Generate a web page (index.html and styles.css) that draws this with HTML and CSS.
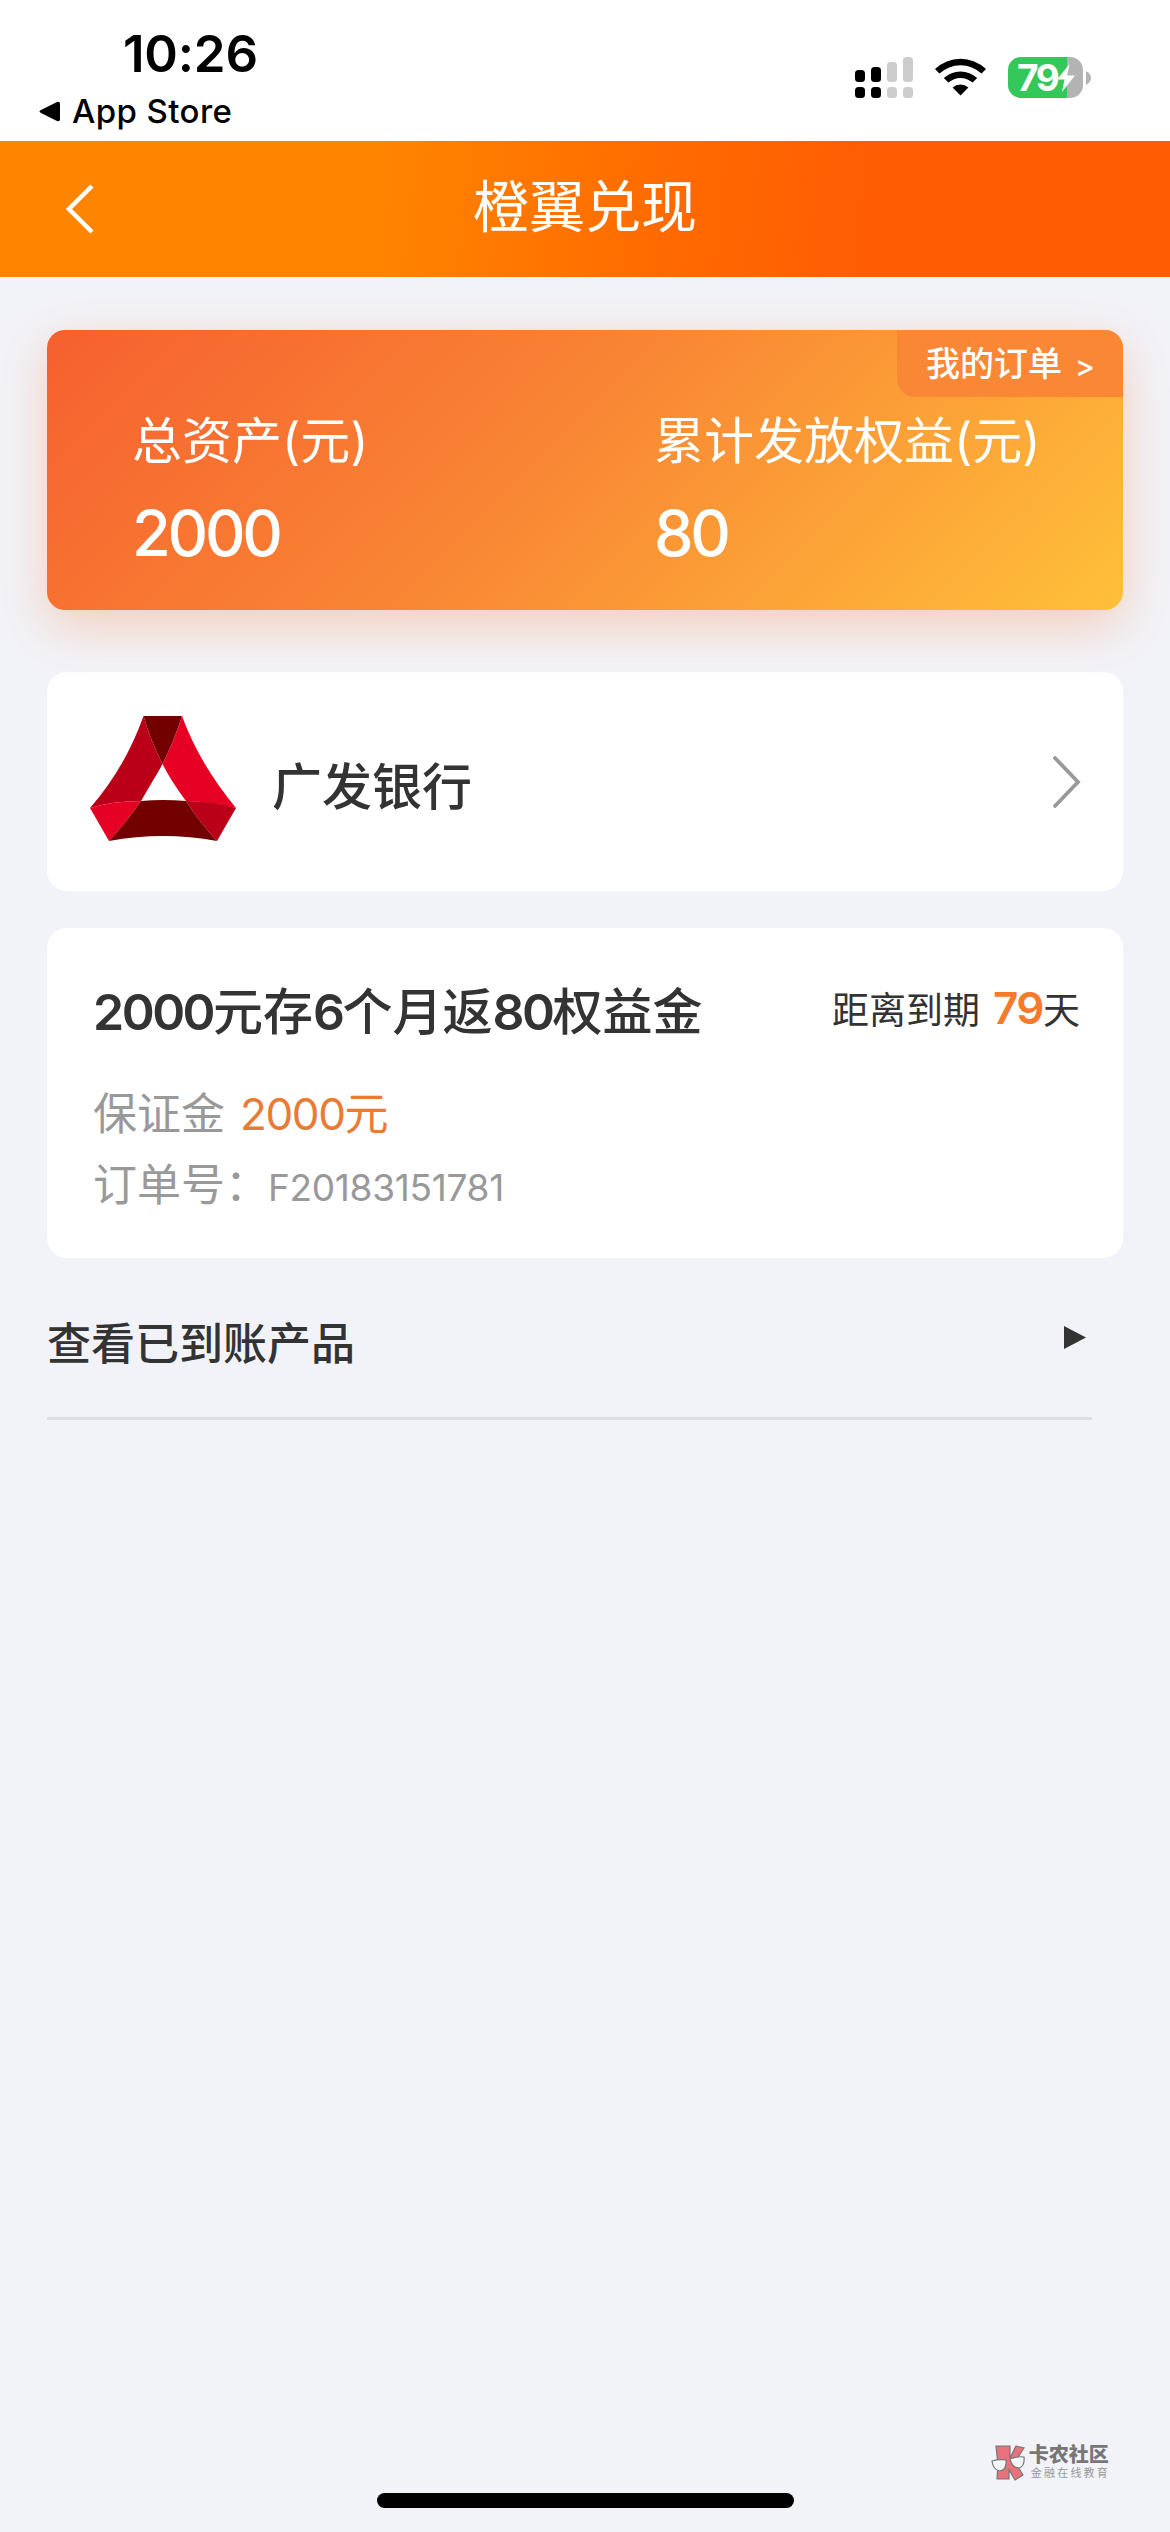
FILE: index.html
```html
<!DOCTYPE html>
<html lang="zh-CN">
<head>
<meta charset="utf-8">
<title>橙翼兑现</title>
<link rel="stylesheet" href="styles.css">
</head>
<body>
<div class="status">
  <div class="status-left">
    <div class="time">10:26</div>
    <div class="return">
      <svg width="21" height="21" viewBox="0 0 21 21"><path d="M2 9 18 1q3-1 3 2v15q0 3-3 2L2 12q-3-1.500 0-3z"/></svg>
      <span>App Store</span>
    </div>
  </div>
  <div class="status-right">
    <svg class="signal" width="58" height="41" viewBox="0 0 58 41">
      <g><rect x="0" y="13" width="10" height="12" rx="3.500"/><rect x="16" y="10" width="10" height="15" rx="3.500"/><rect x="0" y="30" width="10" height="11" rx="3.500"/><rect x="16" y="30" width="10" height="11" rx="3.500"/></g>
      <g fill="#ccc"><rect x="32" y="5" width="10" height="20" rx="3.500"/><rect x="48" y="0" width="10" height="25" rx="3.500"/><rect x="32" y="30" width="10" height="11" rx="3.500"/><rect x="48" y="30" width="10" height="11" rx="3.500"/></g>
    </svg>
    <svg class="wifi" width="51" height="38" viewBox="0 0 51 38">
      <path d="M0 11a37 37 0 0 1 51 0l-4.500 4.600a30.500 30.500 0 0 0-42 0z"/>
      <path d="M8.800 20a24.500 24.500 0 0 1 33.400 0l-4.600 4.600a18 18 0 0 0-24.200 0z"/>
      <path d="M17.600 29.500a12 12 0 0 1 15.800 0L25.500 37.500z"/>
    </svg>
    <div class="battery">
      <div class="battery-body"><span>79</span>
        <svg width="18" height="28" viewBox="0 0 18 28"><path d="M12.500 0 0 15.500h7.500L5 28 18 11.500h-7.800z" fill="#fff"/></svg>
      </div>
      <svg width="5" height="14" viewBox="0 0 5 14"><path d="M0 0q5 3 5 7t-5 7z" fill="#b3b3b3"/></svg>
    </div>
  </div>
</div>
<header class="header">
  <svg class="back" width="28" height="50" viewBox="0 0 28 50"><path d="M26 2 3 25l23 23" fill="none" stroke="#fff" stroke-width="4.500"/></svg>
  <h1>橙翼兑现</h1>
</header>
<main class="main">
  <section class="assets">
    <a class="orders">我的订单<span>&gt;</span></a>
    <div class="asset"><p>总资产(元)</p><strong>2000</strong></div>
    <div class="asset"><p>累计发放权益(元)</p><strong>80</strong></div>
  </section>
  <section class="card bank">
    <svg class="logo" width="148" height="128" viewBox="0 0 148 128">
      <path d="M54.500 1H93Q86 24 73.500 49 62 27 54.500 1z" fill="#720000"/>
      <path d="M54.500 1Q62 27 73.500 49C67 61 60 72 52 86Q24 86 1 93 36 53 54.500 1z" fill="#b90018"/>
      <path d="M93 1Q110 48 147 93 122 87 97 86 82 66 73.500 49 86 24 93 1z" fill="#e60023"/>
      <path d="M1 93Q24 86 52 86 36 109 20 126z" fill="#e60023"/>
      <path d="M147 93Q122 86 97 86 111 108 128 126z" fill="#b90018"/>
      <path d="M52 86Q74 84 97 86 111 108 128 126 74 116 20 126 36 109 52 86z" fill="#720000"/>
    </svg>
    <span class="bank-name">广发银行</span>
    <svg class="chevron" width="28" height="52" viewBox="0 0 28 52"><path d="M2 2l23 24L2 50" fill="none" stroke="#999" stroke-width="3.800" stroke-linecap="round"/></svg>
  </section>
  <section class="card order">
    <div class="order-head">
      <h2><b>2000</b>元存<b>6</b>个月返<b>80</b>权益金</h2>
      <p class="due"><span>距离到期</span><em>79</em><span>天</span></p>
    </div>
    <p class="line">保证金<span class="amount"><b>2000</b>元</span></p>
    <p class="line">订单号：<span class="number">F20183151781</span></p>
  </section>
  <a class="arrived"><span>查看已到账产品</span><svg width="22" height="23" viewBox="0 0 22 23"><path d="M0 0 22 11.500 0 23z" fill="#333"/></svg></a>
</main>
<footer class="footer">
  <div class="brand">
    <svg width="35" height="36" viewBox="0 0 35 36">
      <path d="M5 1h14v12L25 1l8 2-9 14 8 13-8 5-6-10v9H6l1-14z" fill="#e8727c" stroke="#777" stroke-width="1.200"/>
      <path d="M1 16q7-2 14-1 1 10-6 11-7-1-8-10zM19 14q7-3 14-2 1 9-5 11-7 0-9-9z" fill="#f4f5f8" stroke="#777" stroke-width="1.200"/>
    </svg>
    <div class="brand-text"><b>卡农社区</b><small>金融在线教育</small></div>
  </div>
  <div class="home"></div>
</footer>
</body>
</html>
```

FILE: styles.css
```css
* { box-sizing: border-box; }
body, h1, h2, p { margin: 0; font-weight: 400; }
body {
  display: flex; flex-direction: column; width: 1170px; height: 2532px; overflow: hidden;
  background: #f2f3f8; color: #333;
  font-family: Inter, "Noto Sans CJK SC", sans-serif;
}
svg { display: block; flex: none; }
.status { display: flex; justify-content: space-between; height: 141px; background: #fff; color: #000; }
.status-left { padding: 22px 0 0 39px; }
.time { padding-left: 84px; font-size: 51px; line-height: 64px; font-weight: 600; letter-spacing: -.2px; }
.return { display: flex; align-items: center; gap: 12px; margin-top: 5px; font-size: 33px; line-height: 40px; font-weight: 500; letter-spacing: .4px; }
.status-right { display: flex; align-items: flex-start; padding: 57px 79px 0 0; }
.wifi { margin: 1px 22px 0; }
.battery { display: flex; align-items: center; gap: 3px; }
.battery-body {
  display: flex; align-items: center; width: 75px; height: 41px; padding-left: 9px; border-radius: 13px;
  background: linear-gradient(90deg, #34c759 79%, #b3b3b3 79%);
  color: #fff; font-size: 37px; line-height: 41px; font-weight: 700; letter-spacing: -2.500px;
}
.header {
  display: grid; grid-template-columns: 120px 1fr 120px; align-items: center; height: 136px;
  background: linear-gradient(97deg, #ff8500 32%, #ff6a00 57%, #ff5c04 75%); color: #fff;
}
.back { margin-left: 66px; }
.header h1 { text-align: center; font-size: 56px; line-height: 80px; font-weight: 400; margin-top: -5px; }
.main { display: flex; flex-direction: column; padding: 53px 47px 0; }
.assets {
  position: relative; display: grid; grid-template-columns: 522px 1fr; height: 280px; padding: 74px 0 0 85px;
  border-radius: 18px; color: #fff;
  background: linear-gradient(135deg, #f6602f, #f98534 45%, #ffc03a);
  box-shadow: 0 16px 50px rgba(245, 120, 50, .3);
}
.asset p { font-size: 50px; line-height: 74px; font-weight: 400; white-space: nowrap; }
.asset strong { display: block; margin-top: 17px; font-size: 63px; line-height: 76px; font-weight: 500; letter-spacing: -3.300px; }
.orders {
  position: absolute; top: 0; right: 0; display: flex; gap: 13px; width: 226px; height: 67px; padding-left: 29px;
  border-radius: 0 18px 0 18px; background: #fa8735; font-size: 34px; line-height: 68px; font-weight: 500;
}
.orders span { font-size: 30px; line-height: 72px; }
.card { border-radius: 20px; background: #fff; }
.bank { display: flex; align-items: center; height: 219px; margin-top: 62px; padding: 0 42px 0 42px; }
.logo { margin-top: -6px; }
.bank-name { flex: 1; margin: 2px 0 0 35px; font-size: 50px; font-weight: 500; }
.order { height: 330px; margin-top: 37px; padding: 46px 43px 0 46px; }
.order-head { display: flex; justify-content: space-between; align-items: center; height: 76px; margin-bottom: 29px; }
.order h2 { font-size: 50px; line-height: 76px; font-weight: 500; }
.order h2 b { font-weight: 600; letter-spacing: -2.500px; }
.due { display: flex; margin-top: -3px; font-size: 37px; line-height: 70px; font-weight: 400; }
.due em { margin: -3px 0 0 13px; color: #f67a2c; font-size: 44px; font-style: normal; font-weight: 600; letter-spacing: -1.500px; }
.line { height: 71px; font-size: 44px; line-height: 71px; font-weight: 400; color: #999; }
.amount { margin-left: 15px; color: #e97c35; }
.amount b { font-weight: 400; letter-spacing: -1.400px; }
.number { margin-left: -1px; font-size: 37px; font-weight: 400; letter-spacing: -.300px; }
.arrived {
  display: flex; align-items: center; justify-content: space-between; width: 1045px; height: 162px; padding-right: 6px;
  border-bottom: 3px solid #dddee2; font-size: 44px; font-weight: 500;
}
.arrived span { margin-top: 6px; }
.footer { display: flex; flex-direction: column; align-items: center; margin-top: auto; padding-bottom: 24px; }
.brand { display: flex; align-self: flex-end; gap: 3px; margin-right: 60px; }
.brand-text { display: flex; flex-direction: column; color: #777; }
.brand b { font-size: 20px; line-height: 20px; font-weight: 900; }
.brand small { margin: 2px 0 0 2px; font-size: 11px; line-height: 13px; letter-spacing: 2.200px; color: #999; }
.home { width: 417px; height: 15px; margin-top: 12px; border-radius: 8px; background: #000; }
```
